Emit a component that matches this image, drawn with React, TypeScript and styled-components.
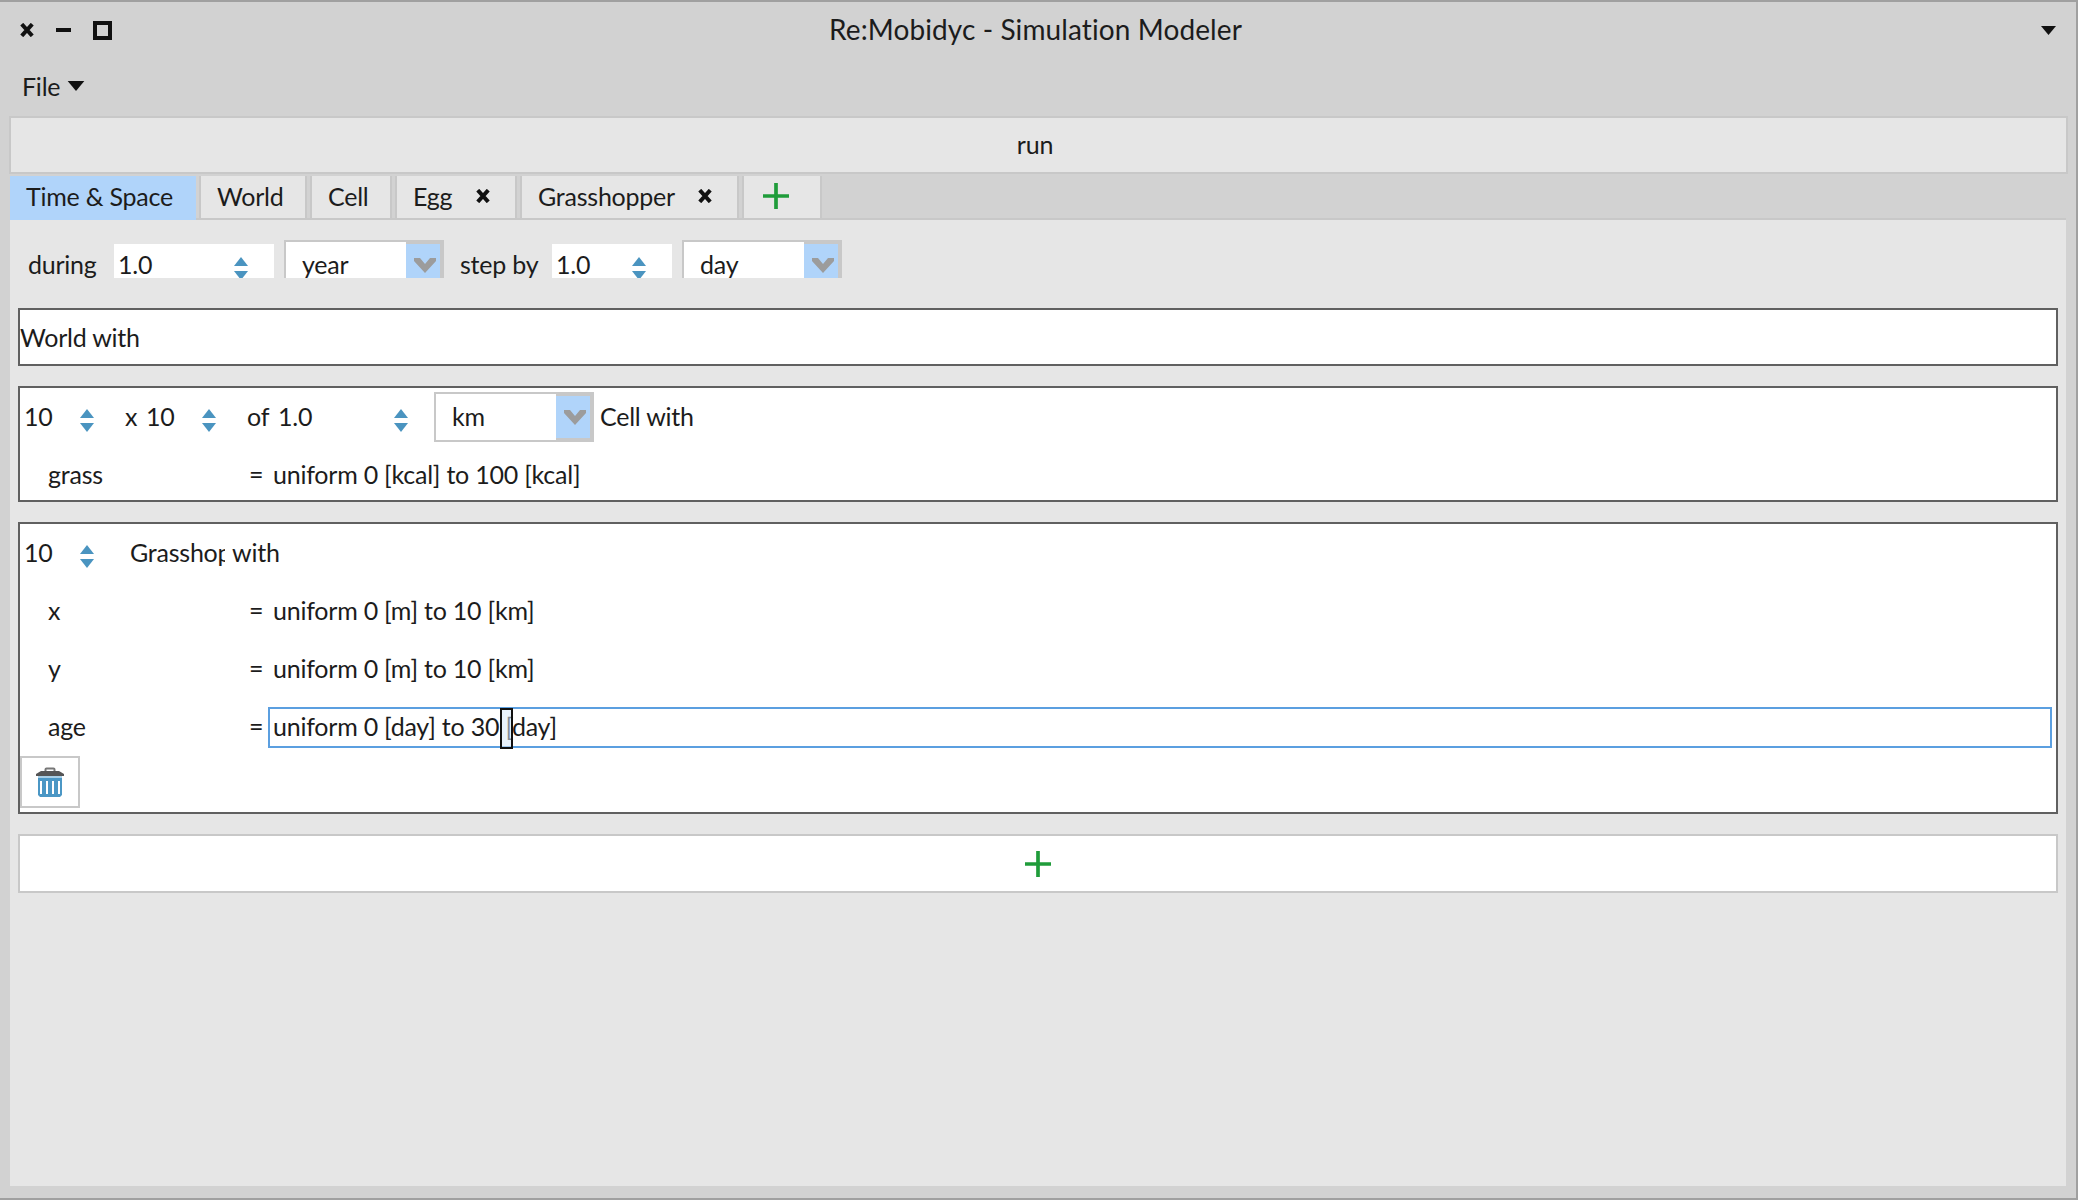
import styled, { createGlobalStyle } from 'styled-components';

const GlobalStyle = createGlobalStyle`
  html, body {
    margin: 0;
    padding: 0;
    background: #d2d2d2;
  }
  body {
    font-family: "Lato", "Liberation Sans", sans-serif;
    font-size: 25px;
    letter-spacing: -0.23px;
    color: #1c1c1c;
  }
  * {
    box-sizing: border-box;
  }
`;

const Window = styled.div`
  height: 1200px;
  display: flex;
  flex-direction: column;
  background: #d2d2d2;
  border-top: 2px solid #a0a0a0;
  border-right: 2px solid #a0a0a0;
  border-bottom: 2px solid #a0a0a0;
`;

const TitleBar = styled.header`
  height: 56px;
  flex: none;
  display: grid;
  grid-template-columns: 1fr auto 1fr;
  align-items: center;
  padding: 0 19px 0 14px;
`;

const WindowControls = styled.div`
  display: flex;
  align-items: center;
  margin-left: 6px;
`;

const MinimizeBar = styled.span`
  width: 15px;
  height: 4px;
  margin-left: 22px;
  background: #111;
`;

const MaximizeBox = styled.span`
  width: 19px;
  height: 19px;
  margin-left: 22px;
  border: 4px solid #111;
`;

const Title = styled.h1`
  margin: 0;
  padding-bottom: 2px;
  font-size: 28px;
  font-weight: 400;
  letter-spacing: 0.1px;
`;

const TitleMenu = styled.div`
  justify-self: end;
  display: flex;
`;

const MenuBar = styled.nav`
  height: 58px;
  flex: none;
  display: flex;
  align-items: center;
  padding: 0 0 2px 22px;
  gap: 7px;
`;

const RunButton = styled.div`
  height: 58px;
  flex: none;
  margin: 0 8px 0 9px;
  padding: 0 7px 2px 0;
  display: flex;
  align-items: center;
  justify-content: center;
  background: #e6e6e6;
  border: 2px solid #c8c8c8;
`;

const TabBar = styled.div`
  height: 46px;
  flex: none;
  margin: 0 10px 0 10px;
  padding-top: 2px;
  display: flex;
  gap: 3px;
  border-bottom: 2px solid #c8c8c8;
`;

const Tab = styled.div<{ $width: number; $active?: boolean }>`
  width: ${(p) => p.$width}px;
  height: 44px;
  flex: none;
  display: flex;
  align-items: center;
  justify-content: space-between;
  padding: 0 ${(p) => (p.$active ? 14 : 25)}px 2px ${(p) => (p.$active ? 14 : 16)}px;
  white-space: nowrap;
  background: ${(p) => (p.$active ? '#b0d4fa' : '#e6e6e6')};
  border: 2px solid ${(p) => (p.$active ? '#b0d4fa' : '#c8c8c8')};
  border-top: none;
`;

const AddTabIcon = styled.span`
  display: flex;
  margin-left: 3px;
`;

const Panel = styled.main`
  flex: 1;
  margin: 0 10px 12px 10px;
  padding: 20px 8px 0 8px;
  display: flex;
  flex-direction: column;
  background: #e6e6e6;
`;

const TopRow = styled.div`
  height: 38px;
  flex: none;
  margin-bottom: 30px;
  padding-left: 10px;
  display: flex;
  align-items: flex-start;
  overflow: hidden;
`;

const Label = styled.span<{ $width?: number; $left?: number }>`
  flex: none;
  ${(p) => (p.$width ? `width: ${p.$width}px;` : '')}
  margin-left: ${(p) => p.$left ?? 0}px;
  margin-bottom: 2px;
  line-height: 48px;
  white-space: nowrap;
`;

const ClippedLabel = styled(Label)`
  overflow: hidden;
`;

const NumberField = styled.div<{ $width: number; $top?: boolean }>`
  width: ${(p) => p.$width}px;
  height: ${(p) => (p.$top ? 42 : 50)}px;
  ${(p) => (p.$top ? 'margin-top: 4px; padding-right: 26px;' : '')}
  flex: none;
  display: flex;
  align-items: center;
  justify-content: space-between;
  padding-left: 4px;
  padding-bottom: 2px;
  background: #fff;
`;

const Spinner = styled.svg`
  width: 14px;
  height: 23px;
  margin-top: 8px;
  flex: none;
`;

const Select = styled.div<{ $left?: number }>`
  width: 160px;
  height: 50px;
  flex: none;
  margin-left: ${(p) => p.$left ?? 0}px;
  display: flex;
  align-items: center;
  justify-content: space-between;
  padding-left: 16px;
  padding-bottom: 2px;
  background: #fff;
  border: 2px solid #c8c8c8;
`;

const SelectArrow = styled.span`
  width: 36px;
  height: 46px;
  align-self: flex-start;
  display: flex;
  align-items: center;
  justify-content: center;
  padding-left: 3px;
  background: #b0d4fa;
  border: 2px solid #c8c8c8;
  border-left: 0;
`;

const Box = styled.section`
  flex: none;
  margin-bottom: 20px;
  background: #fff;
  border: 2px solid #606060;
`;

const WorldBox = styled(Box)`
  height: 58px;
  display: flex;
  align-items: center;
`;

const HeadRow = styled.div`
  height: 58px;
  display: flex;
  align-items: center;
`;

const AttributeRow = styled.div<{ $last?: boolean }>`
  height: ${(p) => (p.$last ? 54 : 58)}px;
  ${(p) => (p.$last ? 'padding-top: 4px;' : '')}
  display: flex;
  align-items: center;
  padding-left: 28px;
  padding-right: 4px;
`;

const AttributeName = styled.span`
  width: 201px;
  flex: none;
  margin-bottom: 2px;
`;

const Equals = styled.span`
  width: 19px;
  flex: none;
  margin-bottom: 2px;
`;

const ValueField = styled.div<{ $focused?: boolean }>`
  flex: 1;
  height: 41px;
  display: flex;
  align-items: center;
  padding: 0 0 2px 3px;
  white-space: pre;
  border: 2px solid ${(p) => (p.$focused ? '#5b9fe0' : 'transparent')};
`;

const Caret = styled.span`
  position: relative;
  width: 0;
  &::after {
    content: '';
    position: absolute;
    left: -5px;
    top: -18px;
    width: 9px;
    height: 37px;
    background: rgba(214, 232, 250, 0.55);
    border: 2px solid #111;
  }
`;

const TrashButton = styled.button`
  width: 60px;
  height: 52px;
  display: block;
  margin: 0 0 4px 0;
  padding: 0;
  background: #fff;
  border: 2px solid #c8c8c8;
  line-height: 0;
`;

const AddButton = styled.div`
  height: 59px;
  flex: none;
  display: flex;
  align-items: center;
  justify-content: center;
  background: #fff;
  border: 2px solid #c8c8c8;
`;

function DownTriangle({ width, height }: { width: number; height: number }) {
  return (
    <svg width={width} height={height} viewBox="0 0 10 6">
      <path d="M0 0h10L5 6z" fill="#111" />
    </svg>
  );
}

function CloseIcon({ size }: { size: number }) {
  return (
    <svg width={size} height={size} viewBox="0 0 12 12">
      <path d="M1.5 1l9 10M10.5 1l-9 10" stroke="#111" strokeWidth="3.4" />
    </svg>
  );
}

function PlusIcon({ size }: { size: number }) {
  return (
    <svg width={size} height={size} viewBox="0 0 24 24">
      <path d="M12 0v24M0 12h24" stroke="#1f9c3a" strokeWidth="3.4" />
    </svg>
  );
}

function SpinnerArrows() {
  return (
    <Spinner viewBox="0 0 14 23">
      <path d="M7 0l7 9H0z" fill="#4a94c0" />
      <path d="M0 14h14l-7 9z" fill="#4a94c0" />
    </Spinner>
  );
}

function Chevron() {
  return (
    <svg width="22" height="15" viewBox="0 0 22 15">
      <path d="M0 0h6l5 6 5-6h6v3L11 15 0 3z" fill="#9c9c9c" />
    </svg>
  );
}

function TrashIcon() {
  return (
    <svg width="28" height="30" viewBox="0 0 28 30">
      <path d="M9.5 6V2.5a1 1 0 0 1 1-1h7a1 1 0 0 1 1 1V6" fill="none" stroke="#777" strokeWidth="2" />
      <path d="M5 4h18l5 3v2H0V7z" fill="#555" />
      <path d="M2 9h24v19l-2 2H4l-2-2z" fill="#4b97c5" />
      <path d="M2 9h24v2H2z" fill="#a9cfe6" />
      <path d="M4 14h2v13H4zM10 14h2v13h-2zM16 14h2v13h-2zM22 14h2v13h-2z" fill="#fff" />
    </svg>
  );
}

export default function App() {
  return (
    <Window>
      <GlobalStyle />
      <TitleBar>
        <WindowControls>
          <CloseIcon size={14} />
          <MinimizeBar />
          <MaximizeBox />
        </WindowControls>
        <Title>Re:Mobidyc - Simulation Modeler</Title>
        <TitleMenu>
          <DownTriangle width={17} height={9} />
        </TitleMenu>
      </TitleBar>

      <MenuBar>
        <span>File</span>
        <DownTriangle width={18} height={10} />
      </MenuBar>

      <RunButton>run</RunButton>

      <TabBar>
        <Tab $width={186} $active>Time &amp; Space</Tab>
        <Tab $width={108}>World</Tab>
        <Tab $width={82}>Cell</Tab>
        <Tab $width={122}>Egg <CloseIcon size={14} /></Tab>
        <Tab $width={219}>Grasshopper <CloseIcon size={14} /></Tab>
        <Tab $width={80}><AddTabIcon><PlusIcon size={26} /></AddTabIcon></Tab>
      </TabBar>

      <Panel>
        <TopRow>
          <Label $width={86}>during</Label>
          <NumberField $width={160} $top>
            1.0
            <SpinnerArrows />
          </NumberField>
          <Select $left={10}>
            year
            <SelectArrow><Chevron /></SelectArrow>
          </Select>
          <Label $width={92} $left={16}>step by</Label>
          <NumberField $width={120} $top>
            1.0
            <SpinnerArrows />
          </NumberField>
          <Select $left={10}>
            day
            <SelectArrow><Chevron /></SelectArrow>
          </Select>
        </TopRow>

        <WorldBox>World with</WorldBox>

        <Box>
          <HeadRow>
            <NumberField $width={74}>
              10
              <SpinnerArrows />
            </NumberField>
            <Label $width={17} $left={31}>x</Label>
            <NumberField $width={74}>
              10
              <SpinnerArrows />
            </NumberField>
            <Label $width={27} $left={31}>of</Label>
            <NumberField $width={134}>
              1.0
              <SpinnerArrows />
            </NumberField>
            <Select $left={26}>
              km
              <SelectArrow><Chevron /></SelectArrow>
            </Select>
            <Label $left={6}>Cell with</Label>
          </HeadRow>
          <AttributeRow $last>
            <AttributeName>grass</AttributeName>
            <Equals>=</Equals>
            <ValueField>uniform 0 [kcal] to 100 [kcal]</ValueField>
          </AttributeRow>
        </Box>

        <Box>
          <HeadRow>
            <NumberField $width={74}>
              10
              <SpinnerArrows />
            </NumberField>
            <ClippedLabel $width={95} $left={36}>Grasshopper</ClippedLabel>
            <Label $left={7}>with</Label>
          </HeadRow>
          <AttributeRow>
            <AttributeName>x</AttributeName>
            <Equals>=</Equals>
            <ValueField>uniform 0 [m] to 10 [km]</ValueField>
          </AttributeRow>
          <AttributeRow>
            <AttributeName>y</AttributeName>
            <Equals>=</Equals>
            <ValueField>uniform 0 [m] to 10 [km]</ValueField>
          </AttributeRow>
          <AttributeRow>
            <AttributeName>age</AttributeName>
            <Equals>=</Equals>
            <ValueField $focused>
              uniform 0 [day] to 30 <Caret />[day]
            </ValueField>
          </AttributeRow>
          <TrashButton aria-label="remove"><TrashIcon /></TrashButton>
        </Box>

        <AddButton><PlusIcon size={26} /></AddButton>
      </Panel>
    </Window>
  );
}
